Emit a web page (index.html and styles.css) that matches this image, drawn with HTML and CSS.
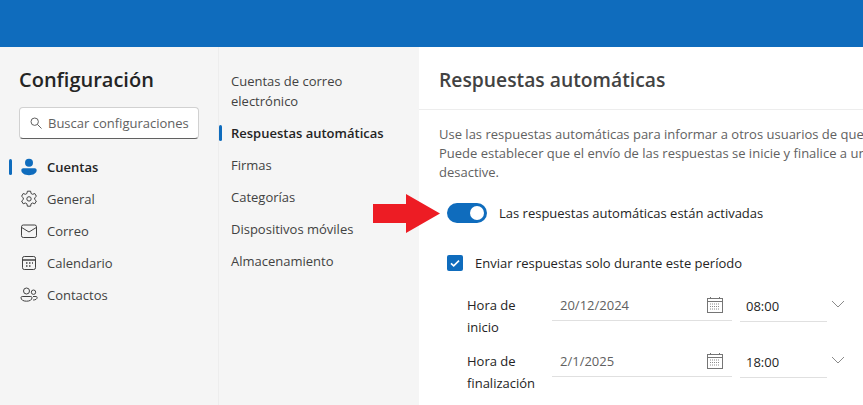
FILE: index.html
```html
<!DOCTYPE html>
<html lang="es">
<head>
    <meta charset="UTF-8">
    <title>Configuración</title>
    <link rel="stylesheet" href="styles.css">
</head>
<body>
    <div class="topbar"></div>
    <div class="settings">
        <aside class="nav-pane">
            <h1>Configuración</h1>
            <div class="search">
                <svg class="search-icon" width="12" height="12" viewBox="0 0 12 12"><circle cx="4.700" cy="4.700" r="3.700" fill="none" stroke="#616161"/><path d="M7.400 7.400l4.100 4.100" stroke="#616161"/></svg>
                <span>Buscar configuraciones</span>
            </div>
            <ul class="nav-list">
                <li class="nav-item active">
                    <svg width="18" height="18" viewBox="0 0 18 18"><circle cx="9" cy="4.800" r="4" fill="#0f6cbd"/><path d="M3.200 10.200h11.600c1 0 1.900.8 1.900 1.900 0 3.300-3.400 5.200-7.700 5.200s-7.700-1.900-7.700-5.200c0-1.100.9-1.900 1.900-1.900z" fill="#0f6cbd"/></svg>
                    Cuentas
                </li>
                <li class="nav-item">
                    <svg width="18" height="18" viewBox="0 0 18 18" fill="none" stroke="#424242"><path d="M7.400 1.200h3.200l.5 2.300 1.500.8 2.200-.8 1.600 2.800-1.700 1.500v1.700l1.700 1.500-1.600 2.800-2.200-.8-1.500.8-.5 2.400H7.400l-.5-2.400-1.500-.8-2.200.8-1.600-2.800 1.700-1.500V7.800L1.600 6.300l1.600-2.800 2.200.8 1.500-.8z" stroke-linejoin="round"/><circle cx="9" cy="8.900" r="2.200"/></svg>
                    General
                </li>
                <li class="nav-item">
                    <svg width="18" height="18" viewBox="0 0 18 18" fill="none" stroke="#424242"><rect x="1.500" y="3" width="15" height="12.500" rx="1.800"/><path d="M1.700 5.500L9 10l7.300-4.500"/></svg>
                    Correo
                </li>
                <li class="nav-item">
                    <svg width="18" height="18" viewBox="0 0 18 18" fill="none" stroke="#424242"><rect x="2.500" y="2.500" width="13" height="13" rx="1.800"/><path d="M2.500 6h13" stroke-width="1.500"/><path d="M6 9h1.500M9 9h1.500M12 9h1M6 12h1.500M9 12h1.500" stroke-width="1.400"/></svg>
                    Calendario
                </li>
                <li class="nav-item">
                    <svg width="18" height="18" viewBox="0 0 18 18" fill="none" stroke="#424242"><circle cx="6.500" cy="5" r="3"/><circle cx="13.500" cy="6.200" r="2.200"/><path d="M1 11.600c0-.7.6-1.100 1.200-1.100h8.600c.7 0 1.200.5 1.200 1.100 0 2.300-2.200 3.600-5.500 3.600S1 13.900 1 11.600z"/><path d="M13 10.500h3.200c.5 0 .9.400.9.900 0 1.700-1.500 2.600-4 2.600"/></svg>
                    Contactos
                </li>
            </ul>
        </aside>
        <nav class="sub-pane">
            <ul>
                <li>Cuentas de correo electrónico</li>
                <li class="active">Respuestas automáticas</li>
                <li>Firmas</li>
                <li>Categorías</li>
                <li>Dispositivos móviles</li>
                <li>Almacenamiento</li>
            </ul>
        </nav>
        <main class="content">
            <h2>Respuestas automáticas</h2>
            <div class="content-body">
                <p class="intro">Use las respuestas automáticas para informar a otros usuarios de que estás de vacaciones.<br>Puede establecer que el envío de las respuestas se inicie y finalice a una hora determinada o hasta que las<br>desactive.</p>
                <div class="toggle-row">
                    <span class="toggle"><span class="knob"></span></span>
                    <span>Las respuestas automáticas están activadas</span>
                </div>
                <div class="check-row">
                    <span class="check">
                        <svg width="16" height="16" viewBox="0 0 16 16"><path d="M4 8.300l2.700 2.600L12 5.600" fill="none" stroke="#fff" stroke-width="1.600"/></svg>
                    </span>
                    <span>Enviar respuestas solo durante este período</span>
                </div>
                <div class="time-row">
                    <div class="time-label">Hora de inicio</div>
                    <div class="date-field">
                        <span>20/12/2024</span>
                        <svg width="16" height="16" viewBox="0 0 16 16" fill="none" stroke="#757575"><rect x=".5" y="1.500" width="15" height="14"/><path d="M.5 4.500h15M3.500 0v2M12.500 0v2"/><path d="M3 7h10M3 9.500h10M3 12h10" stroke-dasharray="1 1" stroke="#8a8a8a"/></svg>
                    </div>
                    <div class="hour-field">08:00</div>
                    <svg class="chevron" width="14" height="8" viewBox="0 0 14 8"><path d="M1 1l6 6 6-6" fill="none" stroke="#8a8a8a"/></svg>
                </div>
                <div class="time-row">
                    <div class="time-label">Hora de finalización</div>
                    <div class="date-field">
                        <span>2/1/2025</span>
                        <svg width="16" height="16" viewBox="0 0 16 16" fill="none" stroke="#757575"><rect x=".5" y="1.500" width="15" height="14"/><path d="M.5 4.500h15M3.500 0v2M12.500 0v2"/><path d="M3 7h10M3 9.500h10M3 12h10" stroke-dasharray="1 1" stroke="#8a8a8a"/></svg>
                    </div>
                    <div class="hour-field">18:00</div>
                    <svg class="chevron" width="14" height="8" viewBox="0 0 14 8"><path d="M1 1l6 6 6-6" fill="none" stroke="#8a8a8a"/></svg>
                </div>
            </div>
        </main>
    </div>
    <svg class="arrow" width="67" height="39" viewBox="0 0 67 39"><path d="M0 10h33V0l34 19.500-34 19.500V29H0z" fill="#ed1c24"/></svg>
</body>
</html>
```

FILE: styles.css
```css
html, body {
    margin: 0;
    height: 100%;
    overflow: hidden;
}
body {
    font-family: "Open Sans", "Noto Sans", Arial, sans-serif;
    font-size: 13px;
    color: #242424;
    background: #fff;
    position: relative;
}
ul {
    list-style: none;
    margin: 0;
    padding: 0;
}
.topbar {
    height: 47px;
    background: #0f6cbd;
}
.settings {
    display: grid;
    grid-template-columns: 219px 200px 1fr;
    height: 358px;
}
.nav-pane {
    background: #f5f5f5;
    border-right: 1px solid #ededed;
    padding: 19px 20px 0 19px;
    box-sizing: border-box;
}
.nav-pane h1 {
    margin: 0;
    font-size: 20px;
    font-weight: 600;
    line-height: 27px;
    color: #242424;
}
.search {
    display: flex;
    align-items: center;
    gap: 6px;
    width: 180px;
    height: 32px;
    margin-top: 14px;
    padding-left: 10px;
    box-sizing: border-box;
    background: #fff;
    border: 1px solid #d1d1d1;
    border-bottom-color: #616161;
    border-radius: 4px;
    color: #616161;
    font-size: 13px;
    white-space: nowrap;
    overflow: hidden;
}
.search-icon {
    flex: none;
}
.nav-list {
    margin-top: 12px;
}
.nav-item {
    display: flex;
    align-items: center;
    gap: 9px;
    height: 32px;
    margin-left: 1px;
    color: #424242;
    position: relative;
}
.nav-item.active {
    font-weight: 600;
    color: #242424;
}
.nav-item.active::before,
.sub-pane li.active::before {
    content: "";
    position: absolute;
    top: 8px;
    width: 3px;
    height: 16px;
    border-radius: 2px;
    background: #0f6cbd;
}
.nav-item.active::before {
    left: -11px;
}
.sub-pane {
    background: #f5f5f5;
    padding: 24px 12px 0;
}
.sub-pane li {
    padding: 0;
    position: relative;
    line-height: 20px;
    margin-bottom: 12px;
    color: #424242;
}
.sub-pane li.active {
    font-weight: 600;
    color: #242424;
}
.sub-pane li.active::before {
    left: -12px;
    top: 2px;
}
.content {
    min-width: 0;
    overflow: hidden;
}
.content h2 {
    margin: 0;
    height: 63px;
    padding: 20px 0 0 20px;
    box-sizing: border-box;
    border-bottom: 1px solid #ededed;
    font-size: 19.3px;
    font-weight: 600;
    line-height: 26px;
    white-space: nowrap;
    color: #424242;
}
.content-body {
    padding: 15px 0 0 20px;
    width: 760px;
}
.intro {
    margin: 0;
    line-height: 19px;
    color: #616161;
    white-space: nowrap;
}
.toggle-row {
    display: flex;
    align-items: center;
    gap: 11px;
    margin: 21px 0 0 9px;
    height: 20px;
}
.toggle {
    width: 40px;
    height: 20px;
    margin-left: -1px;
    margin-right: 1px;
    border-radius: 10px;
    background: #0f6cbd;
    position: relative;
}
.knob {
    position: absolute;
    right: 3px;
    top: 3px;
    width: 14px;
    height: 14px;
    border-radius: 50%;
    background: #fff;
}
.check-row {
    display: flex;
    align-items: center;
    gap: 11px;
    margin: 30px 0 0 9px;
    height: 20px;
}
.check {
    width: 16px;
    height: 16px;
    margin-left: -1px;
    margin-right: 1px;
    border-radius: 2px;
    background: #0f6cbd;
}
.check svg {
    display: block;
}
.time-row {
    display: flex;
    align-items: flex-start;
    margin: 0 0 0 28px;
    height: 56px;
}
.check-row + .time-row {
    margin-top: 15px;
}
.time-label {
    width: 85px;
    box-sizing: border-box;
    padding: 6px 13px 0 0;
    line-height: 22px;
    color: #242424;
}
.date-field {
    width: 180px;
    height: 33px;
    box-sizing: border-box;
    border-bottom: 1px solid #e0e0e0;
    display: flex;
    justify-content: space-between;
    padding: 0 9px 0 8px;
    line-height: 34px;
    color: #616161;
    align-items: flex-start;
}
.date-field svg {
    margin-top: 9px;
}
.hour-field {
    width: 87px;
    height: 34px;
    box-sizing: border-box;
    margin-left: 8px;
    padding: 3px 0 0 6px;
    line-height: 30px;
    border-bottom: 1px solid #e0e0e0;
}
.chevron {
    margin: 12px 0 0 4px;
}
.arrow {
    position: absolute;
    left: 373px;
    top: 194px;
}
```
